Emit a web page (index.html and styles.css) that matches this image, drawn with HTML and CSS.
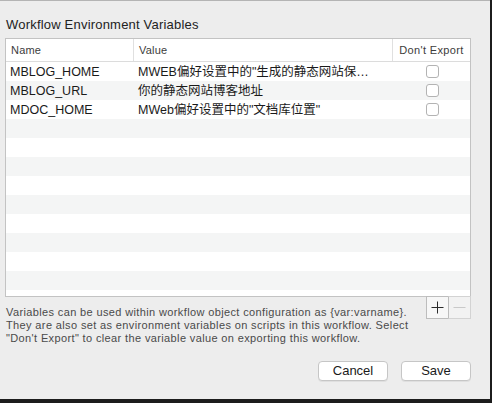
FILE: index.html
```html
<!DOCTYPE html>
<html>
<head>
<meta charset="utf-8">
<link rel="stylesheet" href="styles.css">
</head>
<body>
<div class="window">
  <div class="title">Workflow Environment Variables</div>
  <div class="table">
    <div class="thead">
      <div class="th">Name</div>
      <div class="th">Value</div>
      <div class="th center">Don't Export</div>
    </div>
    <div class="tbody">
      <div class="tr"><div class="td">MBLOG_HOME</div><div class="td val">MWEB偏好设置中的"生成的静态网站保存位置"</div><div class="td chk"><span class="box"></span></div></div>
      <div class="tr"><div class="td">MBLOG_URL</div><div class="td val">你的静态网站博客地址</div><div class="td chk"><span class="box"></span></div></div>
      <div class="tr"><div class="td">MDOC_HOME</div><div class="td val">MWeb偏好设置中的"文档库位置"</div><div class="td chk"><span class="box"></span></div></div>
      <div class="tr"></div><div class="tr"></div><div class="tr"></div><div class="tr"></div><div class="tr"></div>
      <div class="tr"></div><div class="tr"></div><div class="tr"></div><div class="tr"></div><div class="tr"></div>
    </div>
  </div>
  <div class="below">
    <div class="desc">Variables can be used within workflow object configuration as {var:varname}.<br>They are also set as environment variables on scripts in this workflow. Select<br>"Don't Export" to clear the variable value on exporting this workflow.</div>
    <div class="segs">
      <div class="seg">
        <svg width="13" height="13" viewBox="0 0 13 13"><path d="M6.5 0.5V12.5M0.5 6.5H12.5" stroke="#2b2b2b" stroke-width="1" fill="none"/></svg>
      </div>
      <div class="seg disabled">
        <svg width="13" height="13" viewBox="0 0 13 13"><path d="M0.5 6.5H12.5" stroke="#c9c9c9" stroke-width="1" fill="none"/></svg>
      </div>
    </div>
  </div>
  <div class="actions">
    <button class="btn">Cancel</button>
    <button class="btn">Save</button>
  </div>
</div>
</body>
</html>
```
FILE: styles.css
```css
html {
  background: #1c1c1c;
}
body {
  margin: 0;
  font-family: "Liberation Sans", Arial, "Noto Sans CJK SC", sans-serif;
  color: #1a1a1a;
}
.window {
  box-sizing: border-box;
  width: 490px;
  height: 399px;
  background: #ededed;
  border-top: 1px solid #b4b4b4;
  overflow: hidden;
}
.title {
  margin: 16px 0 5px 6px;
  font-size: 13px;
  line-height: 16px;
  letter-spacing: 0.2px;
  color: #222;
}
.table {
  box-sizing: border-box;
  margin-left: 5px;
  width: 466px;
  height: 259px;
  border: 1px solid #c3c3c3;
  background: #fff;
  overflow: hidden;
}
.thead {
  display: grid;
  grid-template-columns: 128px 259px 77px;
  height: 23px;
  box-sizing: border-box;
  border-bottom: 1px solid #dcdcdc;
}
.th {
  box-sizing: border-box;
  font-size: 11px;
  line-height: 22px;
  letter-spacing: 0.2px;
  color: #3c3c3c;
  padding-left: 5px;
  border-right: 1px solid #e0e0e0;
}
.th.center {
  border-right: none;
  padding-left: 0;
  letter-spacing: 0.35px;
  text-align: center;
}
.tbody {
  height: 234px;
  overflow: hidden;
}
.tr {
  display: grid;
  grid-template-columns: 128px 259px 77px;
  height: 19px;
}
.tr:nth-child(even) {
  background: #f4f5f5;
}
.td {
  font-size: 12.5px;
  line-height: 20px;
  padding-left: 4px;
  white-space: nowrap;
  overflow: hidden;
}
.td.val {
  padding-left: 4px;
  padding-right: 12px;
  text-overflow: ellipsis;
}
.td.chk {
  display: flex;
  align-items: center;
  justify-content: center;
  padding-left: 0;
}
.box {
  box-sizing: border-box;
  width: 13px;
  height: 13px;
  border: 1px solid #b3b3b3;
  border-radius: 3px;
  background: #fff;
  margin-left: 1px;
}
.below {
  display: flex;
  justify-content: space-between;
  align-items: flex-start;
  width: 471px;
}
.desc {
  margin: 9px 0 0 6px;
  font-size: 11px;
  line-height: 13px;
  letter-spacing: 0.37px;
  color: #4a4a4a;
  white-space: nowrap;
}
.segs {
  display: flex;
  margin-top: -1px;
}
.seg {
  box-sizing: border-box;
  width: 23px;
  height: 23px;
  border: 1px solid #bdbdbd;
  background: #f7f7f7;
  display: flex;
  align-items: center;
  justify-content: center;
}
.seg.disabled {
  margin-left: -1px;
  border-color: #d3d3d3;
  border-left-color: #bdbdbd;
  background: #f2f2f2;
}
.actions {
  display: flex;
  justify-content: flex-end;
  gap: 13px;
  margin-top: 16px;
  padding-right: 19px;
}
.btn {
  box-sizing: border-box;
  width: 70px;
  height: 20px;
  padding: 0;
  font-family: "Liberation Sans", Arial, sans-serif;
  font-size: 13px;
  line-height: 18px;
  color: #1a1a1a;
  background: #fff;
  border: 1px solid #c6c6c6;
  border-radius: 4px;
  box-shadow: 0 1px 0 rgba(0, 0, 0, 0.06);
}
```
